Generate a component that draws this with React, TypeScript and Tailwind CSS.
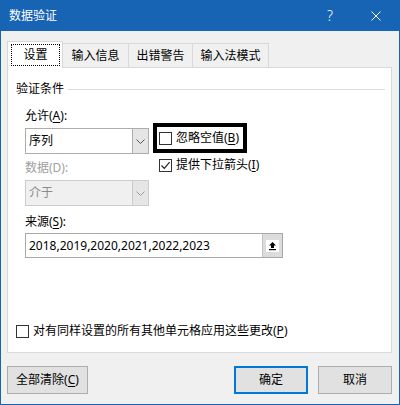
import React from 'react'

/* ── helpers ── */
function U({ children }: { children: React.ReactNode }) {
  return <span className="underline underline-offset-[2px] decoration-1">{children}</span>
}

function Check({ checked }: { checked?: boolean }) {
  return (
    <span className="w-[13px] h-[13px] border border-[#333333] bg-white flex items-center justify-center shrink-0">
      {checked && (
        <svg width="11" height="11" viewBox="0 0 11 11">
          <path d="M1.5 5.5 L4.3 8.3 L9.6 2.2" fill="none" stroke="#222222" strokeWidth="1.2" />
        </svg>
      )}
    </span>
  )
}

function Chevron({ color }: { color: string }) {
  return (
    <svg width="9" height="5" viewBox="0 0 9 5">
      <path d="M0.5 0.5 L4.5 4.5 L8.5 0.5" fill="none" stroke={color} strokeWidth="1" />
    </svg>
  )
}

function Combo({ value, disabled }: { value: string; disabled?: boolean }) {
  return (
    <div
      className={
        disabled
          ? 'flex h-[26px] w-[124px] border border-[#cccccc] bg-[#f0f0f0]'
          : 'flex h-[26px] w-[124px] border border-[#adadad] bg-white'
      }
    >
      <div className={disabled ? 'flex-1 flex items-center pl-[3px] text-[#8c8c8c]' : 'flex-1 flex items-center pl-[3px]'}>
        {value}
      </div>
      <div
        className={
          disabled
            ? 'w-[16px] border-l border-[#cccccc] bg-[#e6e6e6] flex items-center justify-center'
            : 'w-[16px] border-l border-[#adadad] bg-[#e5e5e5] flex items-center justify-center'
        }
      >
        <Chevron color={disabled ? '#9a9a9a' : '#555555'} />
      </div>
    </div>
  )
}

/* ── page ── */
export default function App() {
  return (
    <div className="w-[400px] h-[405px] flex flex-col bg-[#f0f0f0] border-x border-b border-[#1763b4] font-['Noto_Sans','Noto_Sans_CJK_SC',sans-serif] text-[12px] leading-[16px] text-black">
      {/* title bar */}
      <div className="h-[31px] shrink-0 bg-[#1763b4] flex items-center text-white">
        <span className="flex-1 pl-[8px]">数据验证</span>
        <span className="w-[46px] text-center text-[14px] font-light">?</span>
        <span className="w-[46px] flex justify-center">
          <svg width="10" height="10" viewBox="0 0 10 10">
            <path d="M0.5 0.5 L9.5 9.5 M9.5 0.5 L0.5 9.5" stroke="white" strokeWidth="1" />
          </svg>
        </span>
      </div>

      <div className="flex-1 flex flex-col pl-[6px] pr-[7px] pt-[10px] pb-[10px]">
        {/* tabs */}
        <div className="flex items-end h-[26px]">
          <div className="relative z-10 -mb-px h-[27px] w-[56px] border-l border-t border-r border-[#d9d9d9] bg-white pt-[2px] pl-[3px] pr-[2px] pb-[2px] flex">
            <span className="flex-1 border border-dotted border-black flex items-center justify-center">设置</span>
          </div>
          <div className="h-[24px] w-[66px] border-t border-r border-[#d9d9d9] flex items-center justify-center">输入信息</div>
          <div className="h-[24px] w-[64px] border-t border-r border-[#d9d9d9] flex items-center justify-center">出错警告</div>
          <div className="h-[24px] w-[76px] border-t border-r border-[#d9d9d9] flex items-center justify-center">输入法模式</div>
        </div>

        {/* panel */}
        <div className="h-[286px] border border-[#d9d9d9] bg-white flex flex-col pt-[13px]">
          <div className="flex items-center pl-[8px] pr-[6px]">
            <span>验证条件</span>
            <span className="ml-[4px] flex-1 h-px bg-[#dcdcdc]" />
          </div>

          <div className="pl-[17px] flex flex-col">
            <div className="flex mt-[11px]">
              <div className="flex flex-col w-[124px]">
                <span>允许(<U>A</U>):</span>
                <div className="mt-[4px]">
                  <Combo value="序列" />
                </div>
                <span className="mt-[6px] text-[#a0a0a0]">数据(D):</span>
                <div className="mt-[4px]">
                  <Combo value="介于" disabled />
                </div>
              </div>
              <div className="ml-[4px] mt-[15px] flex flex-col">
                <div className="h-[30px] w-[94px] border-4 border-black flex items-center pl-[2px]">
                  <Check />
                  <span className="ml-[4px] whitespace-nowrap">忽略空值(<U>B</U>)</span>
                </div>
                <div className="mt-[4px] flex items-center pl-[6px]">
                  <Check checked />
                  <span className="ml-[4px] whitespace-nowrap">提供下拉箭头(<U>I</U>)</span>
                </div>
              </div>
            </div>

            <span className="mt-[8px]">来源(<U>S</U>):</span>
            <div className="mt-[3px] w-[258px] h-[25px] border border-[#a8a8a8] flex">
              <div className="flex-1 flex items-center pl-[3px]">2018,2019,2020,2021,2022,2023</div>
              <div className="w-[20px] bg-[#dcdcdc] border-l border-[#c4c4c4] flex items-center justify-center">
                <svg width="13" height="12" viewBox="0 0 13 12">
                  <rect x="0" y="0" width="13" height="12" fill="white" />
                  <path d="M6.5 2 L10 5.5 L8 5.5 L8 8 L5 8 L5 5.5 L3 5.5 Z" fill="black" />
                  <rect x="3" y="9" width="7" height="1.2" fill="black" />
                </svg>
              </div>
            </div>
          </div>

          <div className="mt-[65px] pl-[8px] flex items-center">
            <Check />
            <span className="ml-[4px]">对有同样设置的所有其他单元格应用这些更改(<U>P</U>)</span>
          </div>
        </div>

        {/* buttons */}
        <div className="mt-[13px] flex h-[28px]">
          <div className="w-[81px] border border-[#adadad] bg-[#e1e1e1] flex items-center justify-center">
            全部清除(<U>C</U>)
          </div>
          <div className="flex-1" />
          <div className="w-[74px] border-2 border-[#0078d7] bg-[#e1e1e1] flex items-center justify-center">确定</div>
          <div className="ml-[10px] w-[74px] border border-[#adadad] bg-[#e1e1e1] flex items-center justify-center">取消</div>
        </div>
      </div>
    </div>
  )
}
